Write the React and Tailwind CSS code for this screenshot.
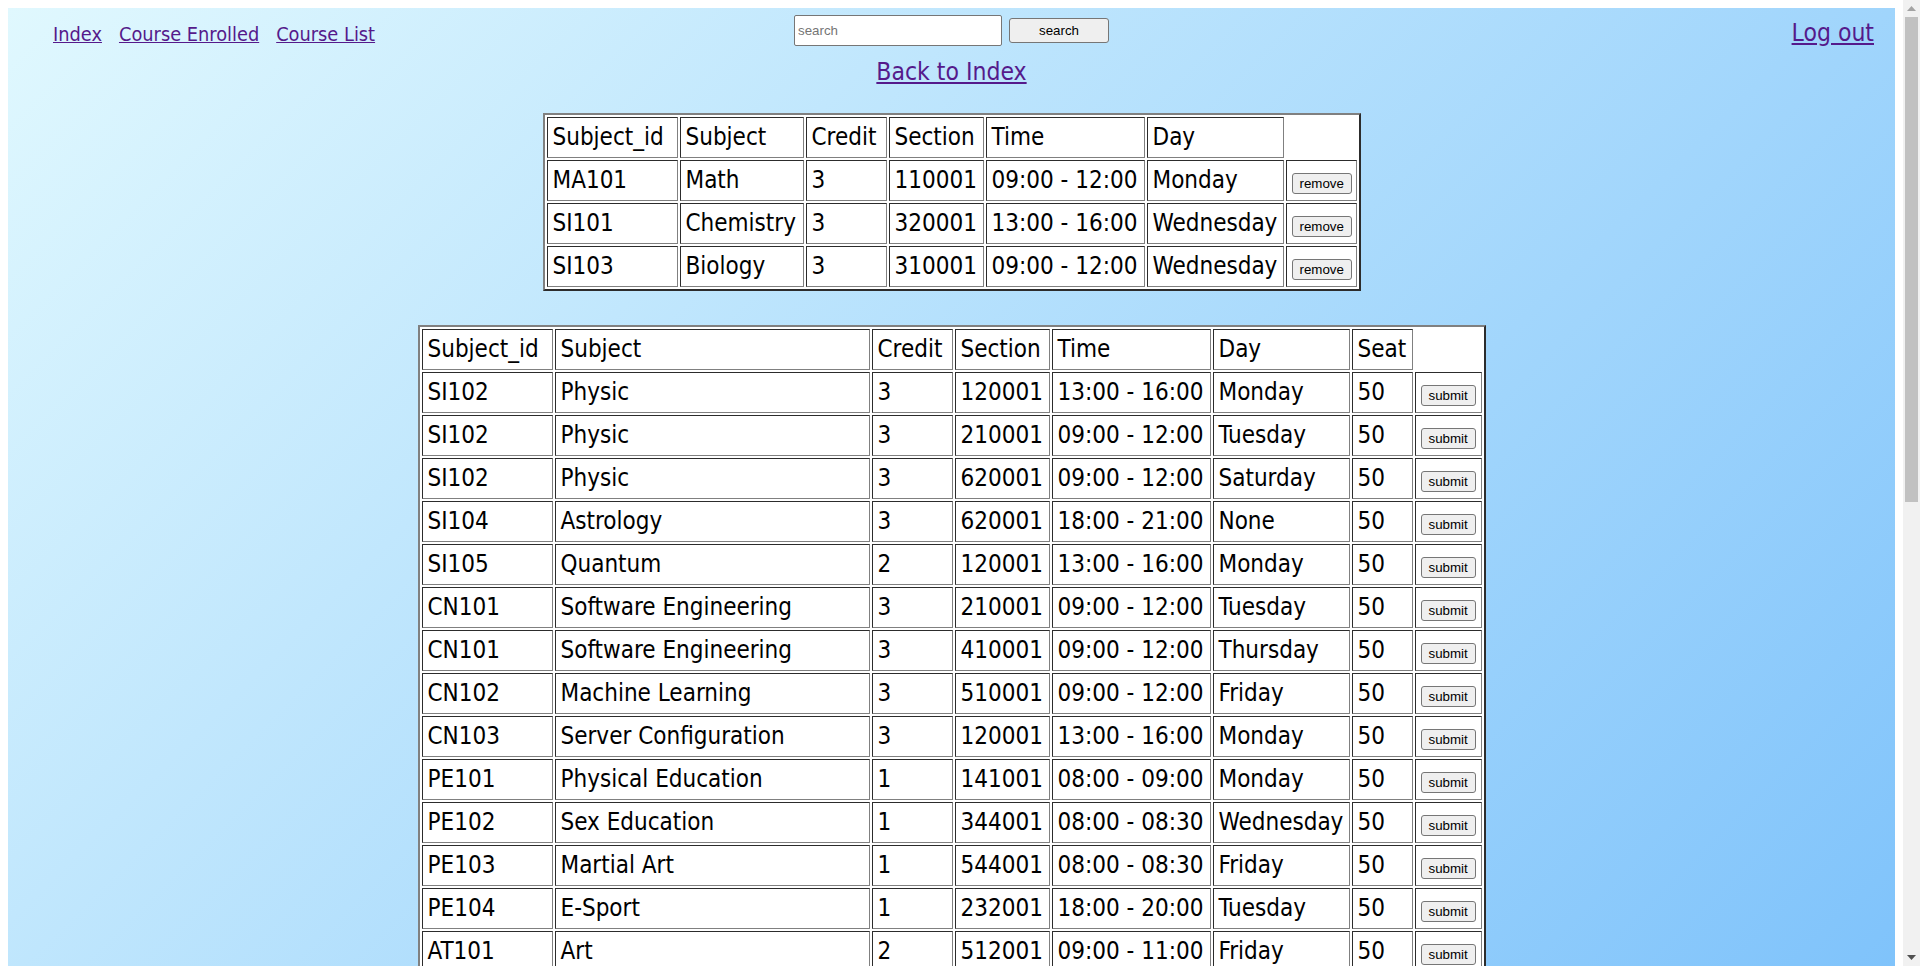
import React from "react"

const enrolled = [
  ["MA101", "Math", "3", "110001", "09:00 - 12:00", "Monday"],
  ["SI101", "Chemistry", "3", "320001", "13:00 - 16:00", "Wednesday"],
  ["SI103", "Biology", "3", "310001", "09:00 - 12:00", "Wednesday"]
]

const courses = [
  ["SI102", "Physic", "3", "120001", "13:00 - 16:00", "Monday", "50"],
  ["SI102", "Physic", "3", "210001", "09:00 - 12:00", "Tuesday", "50"],
  ["SI102", "Physic", "3", "620001", "09:00 - 12:00", "Saturday", "50"],
  ["SI104", "Astrology", "3", "620001", "18:00 - 21:00", "None", "50"],
  ["SI105", "Quantum", "2", "120001", "13:00 - 16:00", "Monday", "50"],
  ["CN101", "Software Engineering", "3", "210001", "09:00 - 12:00", "Tuesday", "50"],
  ["CN101", "Software Engineering", "3", "410001", "09:00 - 12:00", "Thursday", "50"],
  ["CN102", "Machine Learning", "3", "510001", "09:00 - 12:00", "Friday", "50"],
  ["CN103", "Server Configuration", "3", "120001", "13:00 - 16:00", "Monday", "50"],
  ["PE101", "Physical Education", "1", "141001", "08:00 - 09:00", "Monday", "50"],
  ["PE102", "Sex Education", "1", "344001", "08:00 - 08:30", "Wednesday", "50"],
  ["PE103", "Martial Art", "1", "544001", "08:00 - 08:30", "Friday", "50"],
  ["PE104", "E-Sport", "1", "232001", "18:00 - 20:00", "Tuesday", "50"],
  ["AT101", "Art", "2", "512001", "09:00 - 11:00", "Friday", "50"]
]

// header cells carry the column widths (table-fixed)
const enrolledCols = [
  { label: "Subject_id", w: "w-[131px]" },
  { label: "Subject", w: "w-[124px]" },
  { label: "Credit", w: "w-[81px]" },
  { label: "Section", w: "w-[95px]" },
  { label: "Time", w: "w-[159px]" },
  { label: "Day", w: "w-[137px]" }
]

const courseCols = [
  { label: "Subject_id", w: "w-[131px]" },
  { label: "Subject", w: "w-[315px]" },
  { label: "Credit", w: "w-[81px]" },
  { label: "Section", w: "w-[95px]" },
  { label: "Time", w: "w-[159px]" },
  { label: "Day", w: "w-[137px]" },
  { label: "Seat", w: "w-[61px]" }
]

const cell =
  "border border-t-[#2c2c2c] border-l-[#2c2c2c] border-r-[#808080] border-b-[#808080] p-[5px] text-left align-middle leading-[29px] whitespace-nowrap overflow-hidden"

const tableBox =
  "table-fixed border-separate border-spacing-[2px] bg-white border-2 border-t-[#808080] border-l-[#808080] border-r-[#2c2c2c] border-b-[#2c2c2c] text-[24px] text-black"

const SmallButton = ({ children }) => (
  <button className="h-[21px] rounded-[3px] border border-[#767676] bg-[#efefef] px-[7px] align-baseline font-['Liberation_Sans',Arial,sans-serif] text-[13.33px] leading-[19px] text-black [font-stretch:normal]">
    {children}
  </button>
)

// the browser's classic scrollbar, as it shows in the screenshot
const Scrollbar = () => (
  <div className="fixed right-0 top-0 flex h-screen w-[17px] flex-col bg-[#f1f1f1]">
    <div className="flex h-[17px] items-center justify-center">
      <svg width="9" height="5" viewBox="0 0 9 5">
        <path d="M0 5 L4.5 0 L9 5 Z" fill="#a3a3a3" />
      </svg>
    </div>
    <div className="mx-[2px] h-[485px] bg-[#c1c1c1]" />
    <div className="flex-1" />
    <div className="flex h-[17px] items-center justify-center">
      <svg width="9" height="5" viewBox="0 0 9 5">
        <path d="M0 0 L9 0 L4.5 5 Z" fill="#505050" />
      </svg>
    </div>
  </div>
)

const App = () => {
  return (
    <div className="bg-white pl-2 pr-[25px] pt-2">
      <div className="min-h-[1824px] bg-[linear-gradient(135deg,#e0f8fe,#62b3fa)] font-['DejaVu_Sans_Condensed','DejaVu_Sans',sans-serif] leading-[normal] font-stretch-condensed">
        <header className="grid grid-cols-[1fr_auto_1fr] items-start">
          <nav className="flex gap-[17px] pl-[45px] pt-[15px] text-[19.8px]">
            <a href="#" className="text-[#551a8b] underline">Index</a>
            <a href="#" className="text-[#551a8b] underline">Course Enrolled</a>
            <a href="#" className="text-[#551a8b] underline">Course List</a>
          </nav>
          <form className="flex items-center gap-[7px] pt-[7px] font-['Liberation_Sans',Arial,sans-serif] [font-stretch:normal]">
            <input
              type="text"
              placeholder="search"
              className="h-[31px] w-[208px] rounded-[2px] border border-[#767676] bg-white px-[3px] text-[13.33px] text-black outline-none placeholder:text-[#757575]"
            />
            <button
              type="button"
              className="h-[25px] w-[100px] rounded-[3px] border border-[#767676] bg-[#efefef] text-[13.33px] text-black"
            >
              search
            </button>
          </form>
          <div className="justify-self-end pr-[21px] pt-[10px] text-[24.5px]">
            <a href="#" className="text-[#551a8b] underline">Log out</a>
          </div>
        </header>

        <main className="flex flex-col items-center">
          <a href="#" className="mt-[10px] text-[24.5px] text-[#551a8b] underline">
            Back to Index
          </a>

          <table className={`mt-[27px] w-[818px] ${tableBox}`}>
            <tbody>
              <tr>
                {enrolledCols.map((col) => (
                  <td key={col.label} className={`${cell} ${col.w}`}>{col.label}</td>
                ))}
                <td className="w-[71px]" />
              </tr>
              {enrolled.map((row) => (
                <tr key={row[0]}>
                  {row.map((value, i) => (
                    <td key={i} className={cell}>{value}</td>
                  ))}
                  <td className={cell}>
                    <SmallButton>remove</SmallButton>
                  </td>
                </tr>
              ))}
            </tbody>
          </table>

          <table className={`mt-[34px] w-[1068px] ${tableBox}`}>
            <tbody>
              <tr>
                {courseCols.map((col) => (
                  <td key={col.label} className={`${cell} ${col.w}`}>{col.label}</td>
                ))}
                <td className="w-[67px]" />
              </tr>
              {courses.map((row, r) => (
                <tr key={r}>
                  {row.map((value, i) => (
                    <td key={i} className={cell}>{value}</td>
                  ))}
                  <td className={cell}>
                    <SmallButton>submit</SmallButton>
                  </td>
                </tr>
              ))}
            </tbody>
          </table>
        </main>
      </div>
      <Scrollbar />
    </div>
  )
}

export default App
